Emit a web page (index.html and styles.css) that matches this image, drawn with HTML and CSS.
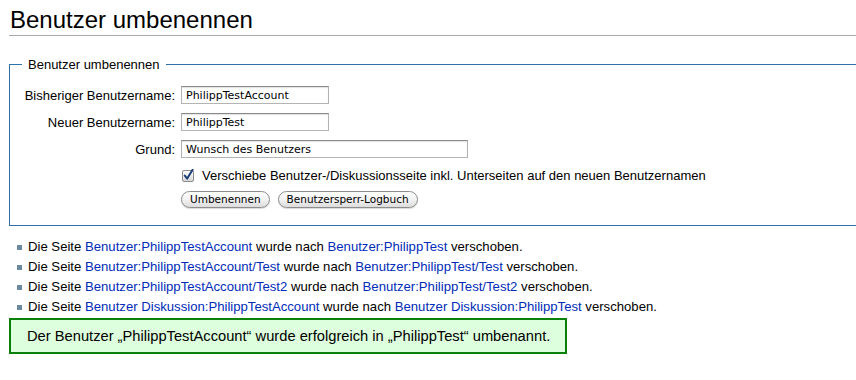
FILE: index.html
```html
<!DOCTYPE html>
<html lang="de">
<head>
    <meta charset="UTF-8">
    <title>Benutzer umbenennen</title>
    <link rel="stylesheet" href="styles.css">
</head>
<body>
    <div class="content">
        <h1 class="page-title">Benutzer umbenennen</h1>

        <form class="rename-form">
            <fieldset>
                <legend>Benutzer umbenennen</legend>
                <div class="form-grid">
                    <label class="form-label" for="oldname">Bisheriger Benutzername:</label>
                    <div class="form-input"><input id="oldname" class="text-input" type="text" value="PhilippTestAccount"></div>

                    <label class="form-label" for="newname">Neuer Benutzername:</label>
                    <div class="form-input"><input id="newname" class="text-input" type="text" value="PhilippTest"></div>

                    <label class="form-label" for="reason">Grund:</label>
                    <div class="form-input"><input id="reason" class="text-input wide" type="text" value="Wunsch des Benutzers"></div>

                    <div></div>
                    <div class="form-input check-row">
                        <!-- Aqua-Checkbox nachgebaut -->
                        <svg class="checkbox" width="13" height="13" viewBox="0 0 13 13">
                            <defs>
                                <linearGradient id="cbg" x1="0" y1="0" x2="0" y2="1">
                                    <stop offset="0" stop-color="#ffffff"/>
                                    <stop offset="1" stop-color="#d6d6d6"/>
                                </linearGradient>
                            </defs>
                            <rect x="0.5" y="1.5" width="11" height="11" rx="1.5" fill="url(#cbg)" stroke="#8d8d8d"/>
                            <path d="M2.8 6.6 L5.2 9.6 L10.6 0.8" fill="none" stroke="#1d3f78" stroke-width="2" stroke-linecap="round" stroke-linejoin="round"/>
                        </svg>
                        <span>Verschiebe Benutzer-/Diskussionsseite inkl. Unterseiten auf den neuen Benutzernamen</span>
                    </div>

                    <div></div>
                    <div class="form-input button-row">
                        <button type="button" class="aqua-button">Umbenennen</button>
                        <button type="button" class="aqua-button">Benutzersperr-Logbuch</button>
                    </div>
                </div>
            </fieldset>
        </form>

        <ul class="move-log">
            <li>Die Seite <a href="#">Benutzer:PhilippTestAccount</a> wurde nach <a href="#">Benutzer:PhilippTest</a> verschoben.</li>
            <li>Die Seite <a href="#">Benutzer:PhilippTestAccount/Test</a> wurde nach <a href="#">Benutzer:PhilippTest/Test</a> verschoben.</li>
            <li>Die Seite <a href="#">Benutzer:PhilippTestAccount/Test2</a> wurde nach <a href="#">Benutzer:PhilippTest/Test2</a> verschoben.</li>
            <li>Die Seite <a href="#">Benutzer Diskussion:PhilippTestAccount</a> wurde nach <a href="#">Benutzer Diskussion:PhilippTest</a> verschoben.</li>
        </ul>

        <div class="success-box">Der Benutzer „PhilippTestAccount“ wurde erfolgreich in „PhilippTest“ umbenannt.</div>
    </div>
</body>
</html>
```

FILE: styles.css
```css
html, body {
    margin: 0;
    background: #fff;
    overflow: hidden;
}
body {
    font-family: "Liberation Sans", Arial, sans-serif;
    font-size: 13px;
    color: #000;
}
a {
    color: #002bb8;
    text-decoration: none;
}

.content {
    padding-left: 9px;
    margin-right: -30px; /* Kasten läuft rechts aus dem Bild */
}

.page-title {
    font-size: 24px;
    font-weight: normal;
    line-height: 29px;
    margin: 5px 0 0 0;
    padding: 0 0 1px 1px;
    border-bottom: 1px solid #aaa;
}

.rename-form fieldset {
    margin: 21px 0 0 0;
    padding: 14px 12px 17px 12px;
    border: 1px solid #2f6fab;
}
.rename-form legend {
    padding: 0 6px;
    font-size: 13px;
}

.form-grid {
    display: grid;
    grid-template-columns: 153px 1fr;
    column-gap: 6px;
    row-gap: 9px;
    align-items: center;
}
.form-label {
    text-align: right;
}

.text-input {
    box-sizing: border-box;
    width: 148px;
    height: 18px;
    margin: 0;
    padding: 0 4px;
    border: 1px solid #b4b4b4;
    border-top-color: #8a8a8a;
    box-shadow: inset 0 1px 1px rgba(0, 0, 0, 0.12);
    font-family: "DejaVu Sans", sans-serif;
    font-size: 11px;
    color: #000;
    outline: none;
}
.text-input.wide {
    width: 287px;
}

.check-row {
    display: flex;
    align-items: center;
    gap: 7px;
    padding-left: 1px;
    margin-top: 1px;
}
.checkbox {
    flex: none;
}

.button-row {
    display: flex;
    gap: 8px;
    margin-top: -1px;
}
.aqua-button {
    height: 17px;
    padding: 0 8px;
    border: 1px solid #8c8c8c;
    border-radius: 9px;
    background: linear-gradient(#ffffff, #f2f2f2 50%, #dcdcdc);
    box-shadow: 0 1px 1px rgba(0, 0, 0, 0.15);
    font-family: "DejaVu Sans", sans-serif;
    font-size: 10.5px;
    line-height: 15px;
    color: #000;
}

.move-log {
    list-style: none;
    margin: 11px 0 0 0;
    padding: 0 0 0 8px;
    line-height: 20px;
    font-size: 13.15px;
}
.move-log li::before {
    content: "";
    display: inline-block;
    width: 5px;
    height: 5px;
    margin-right: 6px;
    vertical-align: 1px;
    background: #6b8aa0;
}

.success-box {
    width: fit-content;
    margin-top: 1px;
    padding: 7px 15px 7px 16px;
    border: 2px solid #0a7f0a;
    background: #ddffdd;
    font-size: 14.7px;
    line-height: 18px;
}
```
